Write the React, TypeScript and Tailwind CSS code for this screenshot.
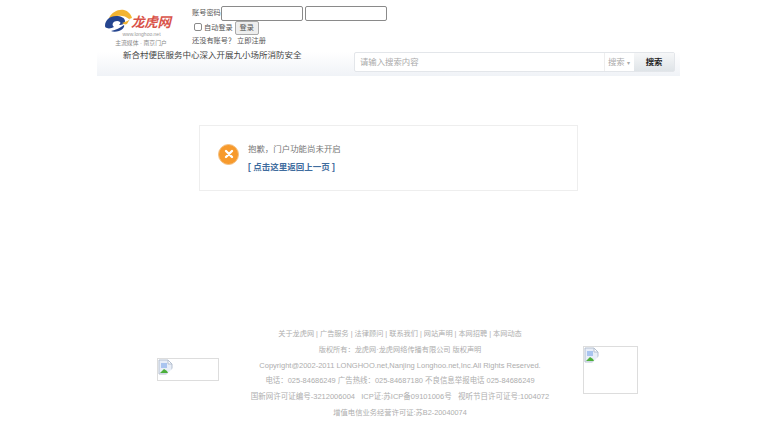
const cjk = "font-['Liberation_Sans','Noto_Sans_CJK_SC',sans-serif]";

function BrokenImage() {
  return (
    <svg width="16" height="16" viewBox="0 0 16 16" className="block">
      <path d="M1 1h9l4 4v10H1z" fill="#e8eef8" stroke="#b5c0d0" strokeWidth="1" />
      <path d="M3 4h6v5H3z" fill="#a9c4ef" />
      <path d="M2 14l4-4 3 2 1 2z" fill="#4caf3a" />
      <path d="M10 1v4h4z" fill="#fff" stroke="#b5c0d0" />
      <path d="M8 16l8-8v8z" fill="#fff" />
    </svg>
  );
}

function Logo() {
  return (
    <div className="flex w-[76px] flex-col items-center">
      <div className="relative h-[23px] w-[76px]">
        <svg width="30" height="24" viewBox="0 0 30 24" className="absolute left-0 top-0">
          <path d="M4 9C7 3 13 0 19 1c4 1 7 4 8 8l-3 1c-3-3-8-4-12-3C9 8 7 9 4 9z" fill="#f2b431" />
          <path d="M0 17C0 11 5 7 11 7c5 0 9 2 9 5 0 3-3 4-6 4 1-1 2-2 1-3-2-2-6-1-7 1-1 2 0 3 1 4-2 1-5 2-7 1-1 0-2-1-2-2z" fill="#25458f" />
          <path d="M6 22c5-1 9-3 13-6 1 2-2 5-5 6-3 1-6 1-8 0z" fill="#25458f" />
          <path d="M17 14c2-1 5-1 8-4l-3 5c-2 1-3 0-5-1z" fill="#f2b431" />
        </svg>
        <span className="absolute left-[26px] top-[2px] text-[13.5px] leading-[20px] italic font-bold whitespace-nowrap tracking-[-0.2px] text-[#d9534a] font-['Noto_Sans_CJK_SC',serif]">
          龙虎网
        </span>
      </div>
      <div className="mt-[-1px] pr-[3px] text-[5px] leading-[6px] text-[#999]">www.longhoo.net</div>
      <div className="mt-[2px] pr-[4px] text-[5.8px] leading-[8px] text-[#888] whitespace-nowrap">主流媒体 · 南京门户</div>
    </div>
  );
}

export default function App() {
  return (
    <div className={`h-[423px] w-[777px] overflow-hidden bg-white ${cjk}`}>
      <div className="mx-auto w-[583px]">
        <div className="flex h-[52px] pl-[8px]">
          <div className="pt-[9px]"><Logo /></div>
          <div className="ml-[11px] pt-[6px] text-[7.2px] text-[#555]">
            <div className="flex h-[15px] items-center">
              <span>账号密码</span>
              <div className="h-[15px] w-[82px] rounded-[2px] border border-[#8a8a8a] bg-white" />
              <div className="ml-[2px] h-[15px] w-[82px] rounded-[2px] border border-[#8a8a8a] bg-white" />
            </div>
            <div className="flex h-[15px] items-start pl-[2px]">
              <div className="mt-[2px] h-[8px] w-[8px] rounded-[2px] border border-[#8a8a8a] bg-white" />
              <span className="ml-[2px] leading-[14px]">自动登录</span>
              <div className="ml-[2px] flex h-[14px] w-[24px] items-center justify-center rounded-[2px] border border-[#aaa] bg-[#eeeeee]">登录</div>
            </div>
            <div className="leading-[10px]">还没有账号？ 立即注册</div>
          </div>
        </div>
        <div className="flex h-[24px] bg-gradient-to-b from-white to-[#f0f3f7]">
          <div className="w-[257px] pl-[26px] text-[8.5px] leading-[6px] whitespace-nowrap text-[#444]">新合村便民服务中心深入开展九小场所消防安全</div>
          <div className="flex h-[20px] w-[321px] rounded-[2px] border border-[#e3e6ea] bg-white">
            <div className="flex-1 pl-[5px] text-[8.4px] leading-[19px] text-[#aaa]">请输入搜索内容</div>
            <div className="w-[30px] border-l border-[#eee] pl-[3px] text-[8.4px] leading-[19px] text-[#aaa] whitespace-nowrap">搜索 <span className="text-[6px]">▾</span></div>
            <div className="w-[40px] bg-gradient-to-b from-[#f6f7f8] to-[#dfe4e8] text-center text-[8.4px] font-bold leading-[19px] text-[#222]">搜索</div>
          </div>
        </div>
        <div className="mx-auto mt-[49px] flex h-[66px] w-[379px] items-center border border-[#eeeeee] pl-[18px]">
          <div className="mb-[8px] flex h-[21px] w-[21px] items-center justify-center rounded-full border border-[#f5c080] bg-[#f79a2c]">
            <svg width="10" height="10" viewBox="0 0 10 10"><path d="M2 2l6 6M8 2l-6 6" stroke="#fff" strokeWidth="2.4" strokeLinecap="round" /></svg>
          </div>
          <div className="ml-[9px] whitespace-nowrap">
            <div className="text-[8.45px] leading-[12px] text-[#777]">抱歉，门户功能尚未开启</div>
            <div className="mt-[6px] text-[8.5px] font-bold leading-[12px] text-[#3f6c9e]">[ 点击这里返回上一页 ]</div>
          </div>
        </div>
        <div className="relative mt-[135px] flex flex-col items-center pl-[23px] text-center text-[7.2px] leading-[15.8px] whitespace-nowrap text-[#aeaeae]">
          <div>关于龙虎网 | 广告服务 | 法律顾问 | 联系我们 | 网站声明 | 本网招聘 | 本网动态</div>
          <div>版权所有：龙虎网·龙虎网络传播有限公司 版权声明</div>
          <div className="text-[7.5px]">Copyright@2002-2011 LONGHOO.net,Nanjing Longhoo.net,Inc.All Rights Reserved.</div>
          <div className="text-[7.45px]">电话：025-84686249 广告热线：025-84687180 不良信息举报电话 025-84686249</div>
          <div className="text-[7.5px]">国新网许可证编号-3212006004 &nbsp; ICP证:苏ICP备09101006号 &nbsp; 视听节目许可证号:1004072</div>
          <div className="text-[7.3px]">增值电信业务经营许可证:苏B2-20040074</div>
          <div className="absolute left-[60px] top-[32px] h-[23px] w-[62px] border border-[#dddddd]"><BrokenImage /></div>
          <div className="absolute left-[486px] top-[20px] h-[48px] w-[55px] border border-[#dddddd]"><BrokenImage /></div>
        </div>
      </div>
    </div>
  );
}
